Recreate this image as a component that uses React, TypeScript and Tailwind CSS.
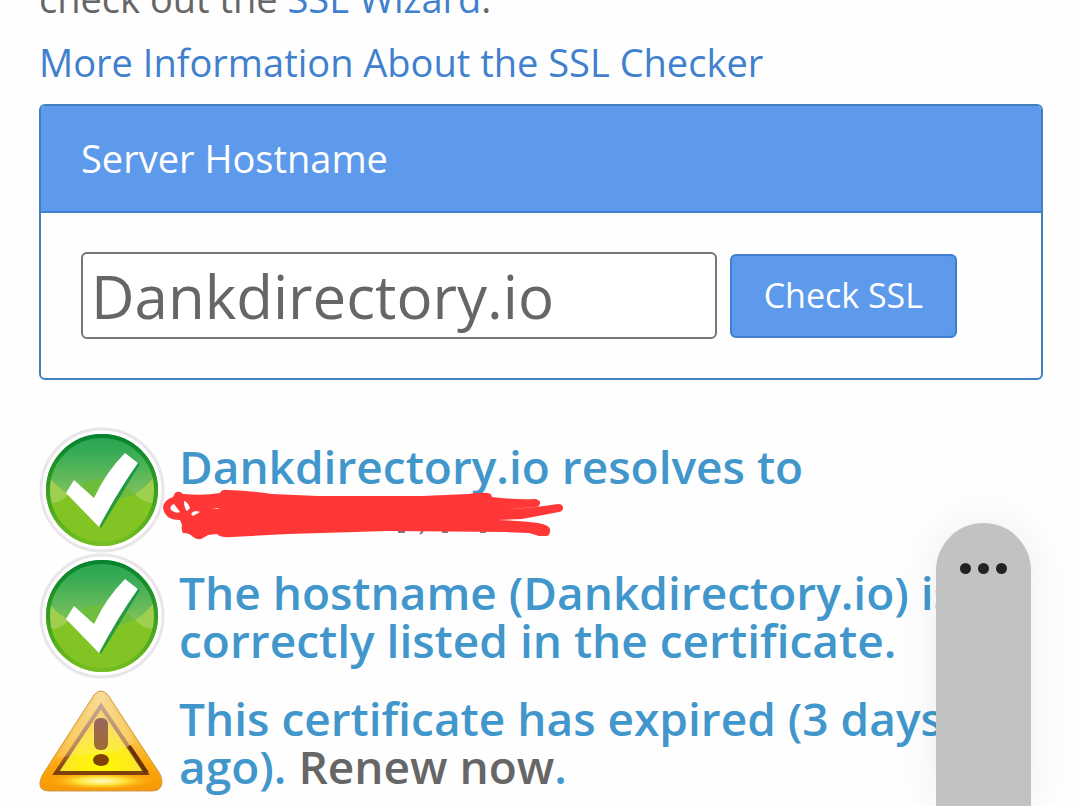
import React, { useState } from "react";

function CheckIcon({ id }: { id: string }) {
  return (
    <svg viewBox="0 0 126 126" className="h-[126px] w-[126px] shrink-0" role="img" aria-label="Passed">
      <defs>
        <linearGradient id={`${id}-base`} x1="0" y1="0" x2="0" y2="1">
          <stop offset="0" stopColor="#1f9d3f" />
          <stop offset="0.5" stopColor="#62b52c" />
          <stop offset="0.65" stopColor="#80c225" />
          <stop offset="1" stopColor="#8cc926" />
        </linearGradient>
        <linearGradient id={`${id}-gloss`} x1="0" y1="0" x2="0" y2="1">
          <stop offset="0" stopColor="#22a04c" />
          <stop offset="0.35" stopColor="#35aa55" />
          <stop offset="1" stopColor="#7cc25c" />
        </linearGradient>
        <linearGradient id={`${id}-edge`} x1="0" y1="0" x2="0" y2="1">
          <stop offset="0" stopColor="#06832f" />
          <stop offset="0.6" stopColor="#3fa51f" />
          <stop offset="1" stopColor="#73bd22" />
        </linearGradient>
        <clipPath id={`${id}-clip`}>
          <circle cx="63" cy="63" r="55" />
        </clipPath>
      </defs>
      <circle cx="63" cy="63" r="61" fill="#fff" stroke="#e8e6e9" strokeWidth="3" />
      <circle cx="63" cy="63" r="56" fill={`url(#${id}-base)`} />
      <g clipPath={`url(#${id}-clip)`}>
        <path d="M6 42Q14 58 30 67L26 84H6ZM120 42Q112 56 96 67L102 84H120Z" fill="#9fcf4f" />
        <path d="M6 76Q20 78 30 67Q45 52 63 52Q80 52 96 67Q106 78 120 76V120H6Z" fill="#82c424" />
        <path d="M6 0H120V42Q112 56 96 67Q80 52 63 52Q45 52 30 67Q14 58 6 44Z" fill={`url(#${id}-gloss)`} />
        <path d="M30 67Q45 52 63 52T96 67Q63 80 30 67Z" fill="#6fbd3c" />
      </g>
      <circle cx="63" cy="63" r="54" fill="none" stroke={`url(#${id}-edge)`} strokeWidth="4" />
      <path d="M58 73L90 29L101 37L62 101L57 94Z" fill="#119044" opacity="0.8" />
      <path d="M35 53L55 71Q67 45 86 26L99 36Q79 64 60 100L27 66Z" fill="#fff" />
    </svg>
  );
}

function WarningIcon() {
  return (
    <svg viewBox="0 0 126 126" className="h-[126px] w-[126px] shrink-0" role="img" aria-label="Warning">
      <defs>
        <linearGradient id="warn-body" x1="0" y1="0" x2="0" y2="1">
          <stop offset="0" stopColor="#f7d68c" />
          <stop offset="0.45" stopColor="#f8c64f" />
          <stop offset="0.75" stopColor="#ffa60b" />
          <stop offset="1" stopColor="#f79805" />
        </linearGradient>
        <radialGradient id="warn-face" cx="0.5" cy="0.9" r="0.75">
          <stop offset="0" stopColor="#fffb00" />
          <stop offset="0.4" stopColor="#fdec1a" />
          <stop offset="1" stopColor="#f7cd62" />
        </radialGradient>
        <radialGradient id="warn-glow">
          <stop offset="0" stopColor="#fffcc8" />
          <stop offset="0.45" stopColor="#ffe43a" />
          <stop offset="1" stopColor="#ffa90a" stopOpacity="0" />
        </radialGradient>
        <linearGradient id="warn-line" x1="0" y1="0" x2="0" y2="1">
          <stop offset="0" stopColor="#b88e80" />
          <stop offset="0.6" stopColor="#a9733c" />
          <stop offset="1" stopColor="#7d4008" />
        </linearGradient>
        <linearGradient id="warn-mark" x1="0" y1="0" x2="0" y2="1">
          <stop offset="0" stopColor="#9a675c" />
          <stop offset="1" stopColor="#a06b36" />
        </linearGradient>
      </defs>
      <path d="M55 16Q62 8 69 16L121 95Q125 104 121 109Q119 112 114 112H10Q4 112 2 109Q-1 104 4 95Z" fill="url(#warn-body)" stroke="#cf9a4c" strokeWidth="1" />
      <ellipse cx="62" cy="102" rx="54" ry="9" fill="url(#warn-glow)" />
      <path d="M62 27L107 94H17Z" fill="url(#warn-face)" stroke="url(#warn-line)" strokeWidth="4" />
      <path d="M60 14Q62 12 64 14L96 63Q77 77 35 76L17 79Z" fill="#fff3d2" opacity="0.2" />
      <path d="M90 67L108 94" stroke="#6b3206" strokeWidth="4" />
      <rect x="55" y="39" width="14" height="32" rx="6" fill="url(#warn-mark)" />
      <ellipse cx="62" cy="81" rx="8" ry="6" fill="#81420a" />
    </svg>
  );
}

function Scribble() {
  return (
    <svg viewBox="0 0 410 54" className="absolute top-[61px] left-[123px] h-[54px] w-[410px]" aria-hidden="true">
      <path d="M236 44H243M261 43L258 46M280 44H286M318 44H324" stroke="#887586" strokeWidth="2" />
      <path
        d="M13 5Q17 2 21 6Q42 8 58 5Q60 1 66 2Q92 3 110 6L156 8H260L306 6Q320 4 326 5Q330 6 330 9Q354 12 373 11Q379 12 378 16Q377 19 373 19L346 21Q372 20 396 16Q401 16 401 20Q401 23 397 24L360 31L336 32Q360 33 376 35Q389 37 388 43Q388 48 384 48L377 48L367 45L343 44L226 43L126 46L70 49Q59 50 55 46L46 47L41 50Q37 53 31 49Q28 45 21 45Q19 42 20 37L18 32Q10 32 6 29Q1 24 1 19Q2 12 11 9Z"
        fill="#ff3837"
      />
      <path d="M12 16L18 24Q14 26 9 22Q7 18 12 16ZM22 13Q26 14 28 20L25 23Q22 20 22 13ZM29 26Q32 21 38 24L31 28ZM50 21L57 20L56 21Z" fill="#fff" />
    </svg>
  );
}

export default function App() {
  const [hostname, setHostname] = useState("Dankdirectory.io");

  return (
    <div className="h-screen overflow-hidden bg-[#fefefe] font-['Open_Sans','Noto_Sans',sans-serif] text-[#666]">
      <main className="-mt-[29px] px-[39px]">
        <p className="text-[38px] leading-[54px]">
          check out the{" "}
          <a href="#wizard" className="text-[#4080cc]">SSL Wizard</a>.
        </p>
        <p className="mt-2.5 text-[38px] leading-[54px]">
          <a href="#information" className="text-[#4080cc]">More Information About the SSL Checker</a>
        </p>

        <form
          onSubmit={(event: React.FormEvent) => event.preventDefault()}
          className="mt-[15px] -mr-0.5 overflow-hidden rounded-md border-2 border-[#3f80bd]"
        >
          <div className="border-b-2 border-[#407fcb] bg-[#5e9aeb] px-10 pt-[25px] pb-[26px] text-[38px] leading-[54px] text-white">
            <label htmlFor="hostname">Server Hostname</label>
          </div>
          <div className="flex items-center gap-[13px] py-[39px] pr-[84px] pl-10">
            <input
              id="hostname"
              type="text"
              value={hostname}
              onChange={(event) => setHostname(event.target.value)}
              className="h-[87px] min-w-0 flex-1 rounded-md border-2 border-[#777] bg-white px-2 text-[60px] leading-[80px] text-[#666] outline-none"
            />
            <button type="submit" className="h-[84px] rounded-md border-2 border-[#407fcf] bg-[#5e9aeb] px-8 text-[34px] text-white">
              Check SSL
            </button>
          </div>
        </form>

        <ul className="mt-[47px] text-[46px] leading-[48px] font-semibold text-[#4197cb]">
          <li className="relative flex h-[126px] gap-[14px]">
            <CheckIcon id="resolves" />
            <p className="pt-[15px]">Dankdirectory.io resolves to</p>
            <Scribble />
          </li>
          <li className="flex h-[126px] gap-[14px]">
            <CheckIcon id="listed" />
            <p className="pt-[15px]">The hostname (Dankdirectory.io) is correctly listed in the certificate.</p>
          </li>
          <li className="flex h-[126px] gap-[14px]">
            <WarningIcon />
            <p className="pt-[15px]">
              This certificate has expired (3 days ago).{" "}
              <a href="#renew" className="text-[#666]">Renew now</a>.
            </p>
          </li>
        </ul>
      </main>

      <button
        type="button"
        aria-label="More options"
        className="fixed top-[523px] right-[49px] bottom-0 flex w-[95px] items-start justify-center gap-[7px] rounded-t-full bg-[#c1c2c2] pt-10 shadow-[0_0_45px_rgba(0,0,0,0.07)]"
      >
        <span className="size-[11px] rounded-full bg-[#222]" />
        <span className="size-[11px] rounded-full bg-[#222]" />
        <span className="size-[11px] rounded-full bg-[#222]" />
      </button>
    </div>
  );
}
